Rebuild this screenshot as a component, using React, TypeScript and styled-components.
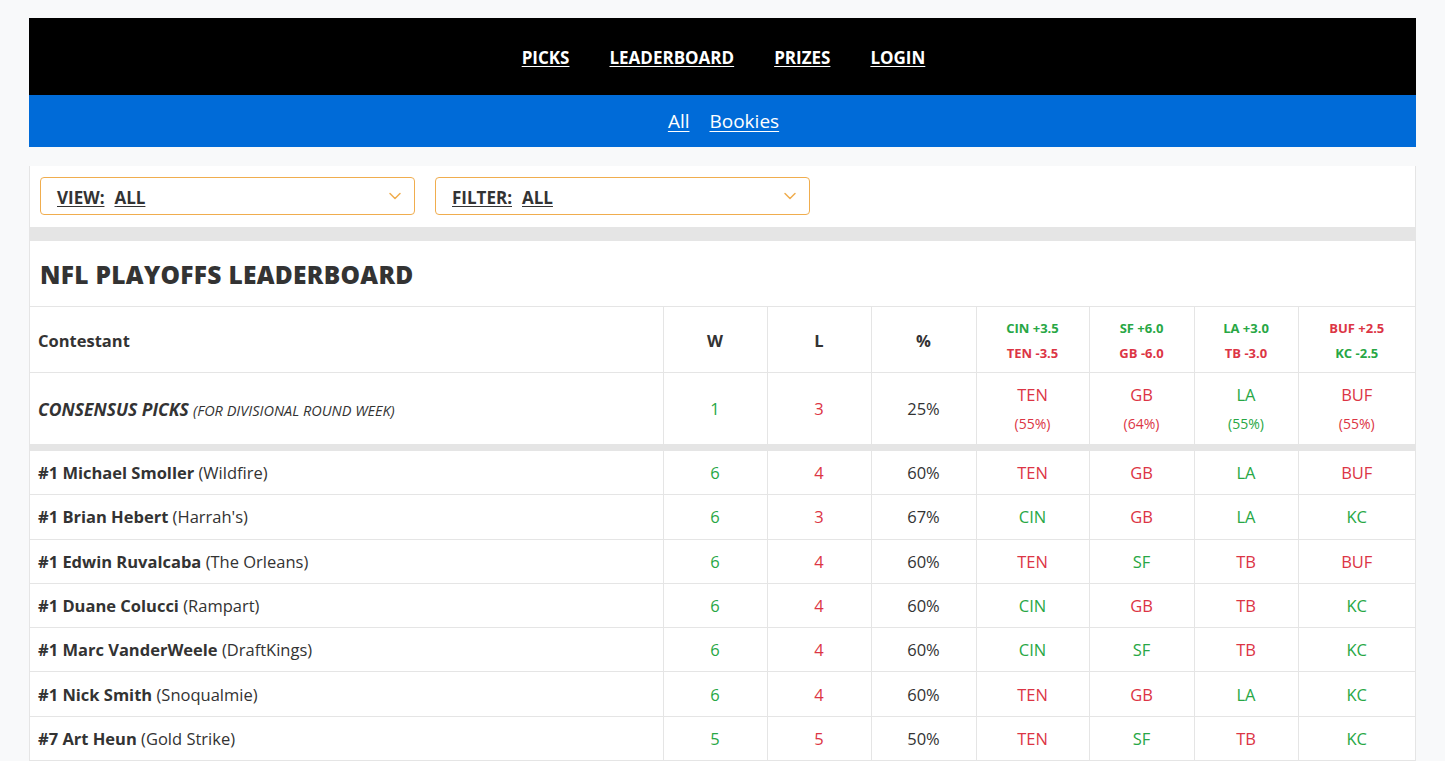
import React from "react";
import styled, { createGlobalStyle } from "styled-components";

const Global = createGlobalStyle`
  html, body { margin: 0; padding: 0; background: #f8f9fa; }
  body { font-family: "Open Sans", "Noto Sans", sans-serif; color: #333; }
  * { box-sizing: border-box; }
`;

const GREEN = "#28a745";
const RED = "#dc3545";
const BORDER = "#e5e5e5";

const Page = styled.div`
  width: 1387px;
  margin: 18px auto 0;
`;

const TopNav = styled.nav`
  height: 77px;
  background: #000;
  display: flex;
  justify-content: center;
  align-items: center;
  gap: 40px;
  padding-top: 2px;
  padding-left: 2px;
`;

const TopLink = styled.a`
  color: #fff;
  font-weight: 700;
  font-size: 17px;
  text-decoration: underline;
  text-underline-offset: 2px;
  cursor: pointer;
`;

const SubNav = styled.nav`
  height: 52px;
  background: #006bd8;
  display: flex;
  justify-content: center;
  align-items: center;
  gap: 20px;
  padding-left: 2px;
`;

const SubLink = styled.a`
  color: #fff;
  font-size: 19px;
  text-decoration: underline;
  text-underline-offset: 3px;
  cursor: pointer;
`;

const Card = styled.div`
  margin: 19px 0 0;
  background: #fff;
  border-left: 1px solid ${BORDER};
  border-right: 1px solid ${BORDER};
`;

const Controls = styled.div`
  display: flex;
  gap: 20px;
  padding: 11px 10px 12px 10px;
`;

const Select = styled.div`
  width: 375px;
  height: 38px;
  border: 1px solid #f0ad4e;
  border-radius: 4px;
  display: flex;
  align-items: center;
  justify-content: space-between;
  padding: 0 12px 0 16px;
`;

const SelectText = styled.div`
  display: flex;
  gap: 10px;
  font-weight: 700;
  font-size: 17px;
  color: #333;
  padding-top: 2px;
`;

const U = styled.span`
  text-decoration: underline;
  text-underline-offset: 2px;
`;

const Band = styled.div<{ $h: number }>`
  height: ${(p) => p.$h}px;
  background: #e5e5e5;
`;

const Title = styled.h1`
  margin: 0;
  height: 65px;
  display: flex;
  align-items: center;
  padding: 2px 10px 0;
  font-size: 24.5px;
  font-weight: 800;
  letter-spacing: 0.3px;
  color: #333;
`;

const Table = styled.table`
  width: 100%;
  border-collapse: collapse;
  table-layout: fixed;
`;

const Th = styled.th<{ $left?: boolean }>`
  height: 66px;
  border: 1px solid ${BORDER};
  border-bottom: none;
  font-size: 16.5px;
  font-weight: 700;
  color: #333;
  text-align: ${(p) => (p.$left ? "left" : "center")};
  padding: 2px ${(p) => (p.$left ? "8px" : "0")} 0;
  &:first-child { border-left: none; }
  &:last-child { border-right: none; }
`;

const Odds = styled.div<{ $c: string }>`
  color: ${(p) => p.$c};
  font-size: 13px;
  font-weight: 700;
  line-height: 25px;
`;

const Td = styled.td<{ $left?: boolean; $c?: string; $h?: number }>`
  height: ${(p) => p.$h ?? 44.3}px;
  border: 1px solid ${BORDER};
  font-size: 16.5px;
  font-weight: 400;
  color: ${(p) => p.$c ?? "#333"};
  text-align: ${(p) => (p.$left ? "left" : "center")};
  padding: 0 ${(p) => (p.$left ? "8px" : "0")};
  &:first-child { border-left: none; }
  &:last-child { border-right: none; }
`;

const Name = styled.span`
  font-weight: 700;
`;

const Consensus = styled.span`
  font-weight: 700;
  font-style: italic;
  font-size: 17.5px;
`;

const Note = styled.span`
  font-style: italic;
  font-size: 14.5px;
`;

const PickTop = styled.div<{ $c: string }>`
  color: ${(p) => p.$c};
  font-size: 16.5px;
  line-height: 29px;
`;

const PickPct = styled.div<{ $c: string }>`
  color: ${(p) => p.$c};
  font-size: 14px;
  line-height: 29px;
`;

const BandRow = styled.tr`
  & > td {
    height: 6px;
    padding: 0;
    background: #e5e5e5;
    border: none;
  }
`;

const Chevron = () => (
  <svg width="14" height="14" viewBox="0 0 14 14" fill="none">
    <path d="M2 4.5 L7 9.5 L12 4.5" stroke="#f0ad4e" strokeWidth="1.5" strokeLinecap="round" strokeLinejoin="round" />
  </svg>
);

const winners = new Set(["CIN", "SF", "LA", "KC"]);
const col = (t: string) => (winners.has(t) ? GREEN : RED);

const rows = [
  ["#1 Michael Smoller", "Wildfire", 6, 4, "60%", ["TEN", "GB", "LA", "BUF"]],
  ["#1 Brian Hebert", "Harrah's", 6, 3, "67%", ["CIN", "GB", "LA", "KC"]],
  ["#1 Edwin Ruvalcaba", "The Orleans", 6, 4, "60%", ["TEN", "SF", "TB", "BUF"]],
  ["#1 Duane Colucci", "Rampart", 6, 4, "60%", ["CIN", "GB", "TB", "KC"]],
  ["#1 Marc VanderWeele", "DraftKings", 6, 4, "60%", ["CIN", "SF", "TB", "KC"]],
  ["#1 Nick Smith", "Snoqualmie", 6, 4, "60%", ["TEN", "GB", "LA", "KC"]],
  ["#7 Art Heun", "Gold Strike", 5, 5, "50%", ["TEN", "SF", "TB", "KC"]],
] as const;

const games = [
  [["CIN +3.5", GREEN], ["TEN -3.5", RED]],
  [["SF +6.0", GREEN], ["GB -6.0", RED]],
  [["LA +3.0", GREEN], ["TB -3.0", RED]],
  [["BUF +2.5", RED], ["KC -2.5", GREEN]],
] as const;

const consensus = [
  ["TEN", "(55%)"],
  ["GB", "(64%)"],
  ["LA", "(55%)"],
  ["BUF", "(55%)"],
];

const widths = [633, 104, 104, 105, 113, 105, 104, 117];

export default function App() {
  return (
    <>
      <Global />
      <Page>
        <TopNav>
          <TopLink>PICKS</TopLink>
          <TopLink>LEADERBOARD</TopLink>
          <TopLink>PRIZES</TopLink>
          <TopLink>LOGIN</TopLink>
        </TopNav>
        <SubNav>
          <SubLink>All</SubLink>
          <SubLink>Bookies</SubLink>
        </SubNav>
        <Card>
          <Controls>
            <Select>
              <SelectText>
                <U>VIEW:</U>
                <U>ALL</U>
              </SelectText>
              <Chevron />
            </Select>
            <Select>
              <SelectText>
                <U>FILTER:</U>
                <U>ALL</U>
              </SelectText>
              <Chevron />
            </Select>
          </Controls>
          <Band $h={14} />
          <Title>NFL PLAYOFFS LEADERBOARD</Title>
          <Table>
            <colgroup>
              {widths.map((w, i) => (
                <col key={i} style={{ width: w }} />
              ))}
            </colgroup>
            <thead>
              <tr>
                <Th $left>Contestant</Th>
                <Th>W</Th>
                <Th>L</Th>
                <Th>%</Th>
                {games.map((g, i) => (
                  <Th key={i}>
                    <Odds $c={g[0][1]}>{g[0][0]}</Odds>
                    <Odds $c={g[1][1]}>{g[1][0]}</Odds>
                  </Th>
                ))}
              </tr>
            </thead>
            <tbody>
              <tr>
                <Td $left $h={72}>
                  <Consensus>CONSENSUS PICKS</Consensus> <Note>(FOR DIVISIONAL ROUND WEEK)</Note>
                </Td>
                <Td $h={72} $c={GREEN}>1</Td>
                <Td $h={72} $c={RED}>3</Td>
                <Td $h={72}>25%</Td>
                {consensus.map(([t, p]) => (
                  <Td key={t} $h={72}>
                    <PickTop $c={col(t)}>{t}</PickTop>
                    <PickPct $c={col(t)}>{p}</PickPct>
                  </Td>
                ))}
              </tr>
              <BandRow>
                <td colSpan={8} />
              </BandRow>
              {rows.map(([n, c, w, l, pct, picks]) => (
                <tr key={n}>
                  <Td $left>
                    <Name>{n}</Name> ({c})
                  </Td>
                  <Td $c={GREEN}>{w}</Td>
                  <Td $c={RED}>{l}</Td>
                  <Td>{pct}</Td>
                  {picks.map((t, i) => (
                    <Td key={i} $c={col(t)}>{t}</Td>
                  ))}
                </tr>
              ))}
            </tbody>
          </Table>
        </Card>
      </Page>
    </>
  );
}
